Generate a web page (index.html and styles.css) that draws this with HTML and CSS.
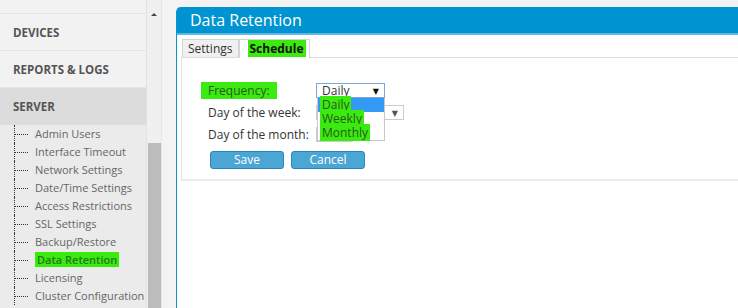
FILE: index.html
```html
<!DOCTYPE html>
<html lang="en">
<head>
    <meta charset="UTF-8">
    <title>Data Retention</title>
    <link rel="stylesheet" href="styles.css">
</head>
<body>
    <!-- left navigation -->
    <div class="sidebar">
        <div class="nav-top"></div>
        <div class="nav-item">DEVICES</div>
        <div class="nav-item">REPORTS &amp; LOGS</div>
        <div class="nav-item active">SERVER</div>
        <ul class="sub">
            <li>Admin Users</li>
            <li>Interface Timeout</li>
            <li>Network Settings</li>
            <li>Date/Time Settings</li>
            <li>Access Restrictions</li>
            <li>SSL Settings</li>
            <li>Backup/Restore</li>
            <li><span class="mark current">Data Retention</span></li>
            <li>Licensing</li>
            <li>Cluster Configuration</li>
        </ul>
    </div>
    <div class="scroll">
        <span class="up"></span>
        <div class="thumb"></div>
    </div>

    <!-- main panel -->
    <div class="main">
        <div class="panel">
            <div class="panel-head">Data Retention</div>
            <div class="panel-body">
                <div class="tabs">
                    <span class="tab">Settings</span>
                    <span class="tab selected"><span class="mark">Schedule</span></span>
                </div>
                <div class="tab-content">
                    <div class="row">
                        <label class="lbl"><span class="mark lbl-mark">Frequency:</span></label>
                        <div class="select open">
                            <span class="value">Daily</span>
                            <ul class="list">
                                <li class="opt highlight"><span class="mark">Daily</span></li>
                                <li class="opt"><span class="mark">Weekly</span></li>
                                <li class="opt"><span class="mark">Monthly</span></li>
                            </ul>
                        </div>
                    </div>
                    <div class="row">
                        <label class="lbl">Day of the week:</label>
                        <div class="select wide"><span class="value"></span></div>
                    </div>
                    <div class="row">
                        <label class="lbl">Day of the month:</label>
                        <div class="input"></div>
                    </div>
                    <div class="buttons">
                        <button class="btn">Save</button>
                        <button class="btn">Cancel</button>
                    </div>
                </div>
            </div>
        </div>
    </div>
</body>
</html>
```

FILE: styles.css
```css
html, body {
    margin: 0;
    height: 100%;
}
body {
    display: flex;
    overflow: hidden;
    background: #f3f3f3;
    font-family: "Open Sans", "DejaVu Sans", sans-serif;
}

/* sidebar */
.sidebar {
    width: 146px;
    flex: none;
    overflow: hidden;
    background: #f2f2f2;
    border-right: 1px solid #e2e2e2;
}
.nav-top {
    height: 14px;
    border-bottom: 1px solid #e4e4e4;
    box-sizing: border-box;
}
.nav-item {
    height: 37px;
    line-height: 37px;
    box-sizing: border-box;
    border-bottom: 1px solid #e4e4e4;
    padding-left: 13px;
    font-size: 11.5px;
    font-weight: bold;
    color: #555;
}
.nav-item.active {
    background: #dcdcdc;
    border-bottom: none;
}
.sub {
    list-style: none;
    margin: 0;
    padding: 0 0 0 14px;
    background: #ebebeb;
    height: 183px;
}
.sub li {
    position: relative;
    height: 18px;
    line-height: 18px;
    padding-left: 20px;
    border-left: 1px dotted #333;
    font-size: 11px;
    color: #666;
    white-space: nowrap;
}
.sub li::before {
    content: "";
    position: absolute;
    left: 0;
    top: 9px;
    width: 13px;
    border-top: 1px dotted #333;
}
.mark {
    background: #3bea0f;
    color: #2a5a1c;
    padding: 0 2px;
}
.current {
    color: #237a1a;
    font-weight: 600;
}

/* fake scrollbar */
.scroll {
    width: 14px;
    flex: none;
    position: relative;
    background: #f0f0f0;
    border-right: 1px solid #e6e6e6;
}
.scroll .up {
    position: absolute;
    left: 4px;
    top: 13px;
    border-left: 3px solid transparent;
    border-right: 3px solid transparent;
    border-bottom: 3px solid #444;
}
.scroll .thumb {
    position: absolute;
    left: 1px;
    right: 0;
    top: 143px;
    bottom: 0;
    background: #bcbcbc;
}

/* panel */
.main {
    flex: 1;
    padding: 7px 0 0 14px;
    min-width: 0;
}
.panel {
    height: 100%;
    background: #fff;
    border-left: 1px solid #0a95d2;
    border-top-left-radius: 5px;
}
.panel-head {
    height: 26px;
    line-height: 26px;
    border-top-left-radius: 4px;
    background: #0093d1;
    border-bottom: 2px solid #5cb8e4;
    padding-left: 13px;
    color: #fff;
    font-size: 16px;
}
.panel-body {
    padding: 4px 0 0 4px;
}
.tabs {
    display: flex;
    height: 18px;
    border-bottom: 1px solid #dcdcdc;
    padding-left: 1px;
}
.tab {
    height: 18px;
    line-height: 17px;
    box-sizing: border-box;
    padding: 0 5px;
    border: 1px solid #d4d4d4;
    border-bottom: none;
    background: #f0f0f0;
    font-size: 12px;
    color: #333;
}
.tab.selected {
    height: 19px;
    background: #fff;
    font-weight: bold;
    padding: 0 3px 0 8px;
}
.tab.selected .mark {
    color: #111;
    padding: 0 2px;
}
.tab-content {
    height: 123px;
    border-left: 1px solid #e2e2e2;
    border-bottom: 2px solid #ececec;
    padding: 21px 0 0 26px;
    box-sizing: border-box;
}

/* form */
.row {
    display: flex;
    align-items: center;
    height: 22px;
    font-size: 12px;
    color: #333;
}
.lbl {
    width: 108px;
    flex: none;
}
.lbl-mark {
    margin-left: -7px;
    padding: 0 7px 0 7px;
}
.select {
    position: relative;
    box-sizing: border-box;
    width: 69px;
    height: 15px;
    line-height: 13px;
    border: 1px solid #ccc;
    padding-left: 5px;
    background: #fff;
}
.select::after {
    content: "▼";
    position: absolute;
    right: 5px;
    top: 0;
    font-size: 8px;
    color: #555;
}
.select.open {
    border-color: #7aa8dc;
    z-index: 2;
}
.select.open::after {
    color: #111;
}
.select.wide {
    width: 88px;
}
.select .list {
    position: absolute;
    top: 14px;
    left: 0;
    width: 68px;
    margin: 0;
    padding: 0;
    list-style: none;
    background: #fff;
    border: 1px solid #c8c8c8;
    border-top: none;
    box-sizing: border-box;
}
.select .opt {
    height: 14px;
    line-height: 14px;
    padding-left: 2px;
    font-size: 12px;
}
.select .highlight {
    background: #3399f3;
}
.input {
    width: 37px;
    height: 15px;
    box-sizing: border-box;
    border: 1px solid #ccc;
}
.buttons {
    display: flex;
    gap: 7px;
    margin-top: 6px;
    padding-left: 2px;
}
.btn {
    width: 74px;
    height: 18px;
    padding: 0;
    border: 1px solid #2b86bd;
    border-radius: 3px;
    background: #4ba6d3;
    color: #fff;
    font-family: "Open Sans", "DejaVu Sans", sans-serif;
    font-size: 12px;
    line-height: 16px;
}
```
